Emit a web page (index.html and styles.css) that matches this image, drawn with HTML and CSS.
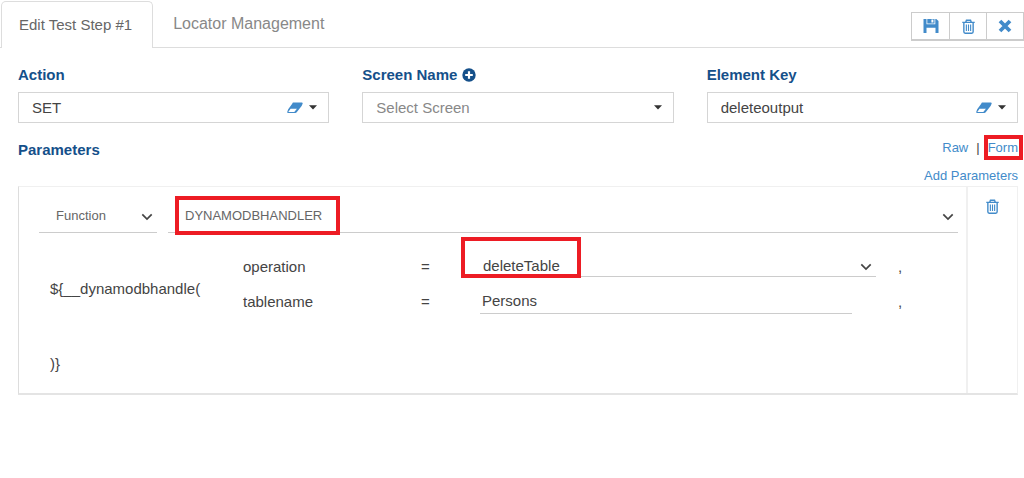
FILE: index.html
```
<!DOCTYPE html>
<html lang="en">
<head>
    <meta charset="UTF-8">
    <meta name="viewport" content="width=device-width, initial-scale=1.0">
    <title>Edit Test Step</title>
    <link rel="stylesheet" href="styles.css">
</head>
<body>

<!-- Shared icons -->
<svg class="icon-defs" aria-hidden="true">
    <symbol id="icon-trash" viewBox="0 0 14 16">
        <path d="M0.3 3.5h13.4M4 3.5l0.8-2.3h4.4l0.8 2.3M2 3.5v10.2q0 1.5 1.4 1.5h7.2q1.4 0 1.4-1.5v-10.2" fill="none" stroke="currentColor" stroke-width="1.5"/>
        <path d="M4.7 5.8v7M7 5.8v7M9.3 5.8v7" fill="none" stroke="currentColor" stroke-width="1.2"/>
    </symbol>
    <symbol id="icon-eraser" viewBox="0 0 16 12">
        <path fill="currentColor" fill-rule="evenodd" d="M6.2 0.5h8.6q1.2 0 0.8 1.2l-1 2.4-4.7 6q-0.6 0.9-1.7 0.9h-7q-1.4 0-0.9-1.3l0.9-2.5 4-5.5q0.4-1.2 1-1.2zM3.6 6.8l-2 2.7q-0.4 0.6 0.2 0.6h5.5l2.6-3.3z"/>
    </symbol>
    <symbol id="icon-caret" viewBox="0 0 8 5">
        <path fill="#333" d="M0 0.3h8l-4 4.2z"/>
    </symbol>
    <symbol id="icon-chevron" viewBox="0 0 12 8">
        <path d="M1.3 1.3l4.7 4.7 4.7-4.7" fill="none" stroke="#444" stroke-width="1.7"/>
    </symbol>
</svg>

<header class="topbar">
    <nav class="tabs">
        <a class="tab active" href="#edit">Edit Test Step #1</a>
        <a class="tab" href="#locator">Locator Management</a>
    </nav>
    <div class="toolbar">
        <button type="button" aria-label="Save">
            <svg width="16" height="16" viewBox="0 0 16 16"><path fill="currentColor" fill-rule="evenodd" d="M0.5 1h3v5.2h8.8v-5.2h1l2.2 2v12h-3v-5.3h-9v5.3h-3zM4.3 1h7.2v4.4h-7.2zM8.4 1.6v3h2v-3z"/></svg>
        </button>
        <button type="button" aria-label="Delete">
            <svg width="13" height="15"><use href="#icon-trash"/></svg>
        </button>
        <button type="button" aria-label="Close">
            <svg width="14" height="14" viewBox="0 0 14 14"><path d="M2 2l10 10M12 2l-10 10" stroke="currentColor" stroke-width="3.8"/></svg>
        </button>
    </div>
</header>

<main class="content">
    <!-- Step fields -->
    <div class="fields">
        <div class="field">
            <label for="action">Action</label>
            <div class="select-box">
                <select id="action"><option>SET</option></select>
                <span class="select-icons">
                    <svg class="eraser" width="16" height="12"><use href="#icon-eraser"/></svg>
                    <svg width="8" height="5"><use href="#icon-caret"/></svg>
                </span>
            </div>
        </div>
        <div class="field">
            <label for="screen">Screen Name
                <svg width="14" height="14" viewBox="0 0 14 14"><circle cx="7" cy="7" r="6.7" fill="currentColor"/><path d="M7 3.2v7.6M3.2 7h7.6" stroke="#fff" stroke-width="2.2"/></svg>
            </label>
            <div class="select-box placeholder">
                <select id="screen"><option>Select Screen</option></select>
                <span class="select-icons">
                    <svg width="8" height="5"><use href="#icon-caret"/></svg>
                </span>
            </div>
        </div>
        <div class="field">
            <label for="element">Element Key</label>
            <div class="select-box">
                <select id="element"><option>deleteoutput</option></select>
                <span class="select-icons">
                    <svg class="eraser" width="16" height="12"><use href="#icon-eraser"/></svg>
                    <svg width="8" height="5"><use href="#icon-caret"/></svg>
                </span>
            </div>
        </div>
    </div>

    <!-- Parameters -->
    <div class="params-head">
        <h2>Parameters</h2>
        <div class="params-links">
            <div class="view-links">
                <a href="#raw">Raw</a>
                <span>|</span>
                <a class="marked" href="#form">Form<span class="mark mark-form"></span></a>
            </div>
            <a href="#add">Add Parameters</a>
        </div>
    </div>

    <section class="panel">
        <div class="panel-main">
            <div class="type-row">
                <div class="line-select">
                    <select aria-label="Parameter type"><option>Function</option></select>
                    <svg class="chevron" width="12" height="8"><use href="#icon-chevron"/></svg>
                </div>
                <div class="line-select">
                    <select aria-label="Function name"><option>DYNAMODBHANDLER</option></select>
                    <svg class="chevron" width="12" height="8"><use href="#icon-chevron"/></svg>
                    <span class="mark mark-function"></span>
                </div>
            </div>
            <div class="call">
                <div class="call-name">${__dynamodbhandle(</div>
                <div class="args">
                    <label for="operation">operation</label>
                    <span>=</span>
                    <div class="line-select arg-select">
                        <select id="operation"><option>deleteTable</option></select>
                        <svg class="chevron" width="12" height="8"><use href="#icon-chevron"/></svg>
                        <span class="mark mark-operation"></span>
                    </div>
                    <span class="comma">,</span>

                    <label for="tablename">tablename</label>
                    <span>=</span>
                    <input id="tablename" type="text" value="Persons">
                    <span class="comma">,</span>
                </div>
            </div>
            <div class="call-end">)}</div>
        </div>
        <div class="panel-side">
            <button type="button" aria-label="Delete parameter">
                <svg width="13" height="15"><use href="#icon-trash"/></svg>
            </button>
        </div>
    </section>
</main>

</body>
</html>
```
FILE: styles.css
```
* {
    box-sizing: border-box;
}

body {
    margin: 0;
    background-color: #fff;
    color: #444;
    font-family: "Liberation Sans", Arial, sans-serif;
    font-size: 15px;
    line-height: 20px;
}

a {
    color: #428bca;
    text-decoration: none;
}

button, input, select {
    font: inherit;
    color: inherit;
}

button {
    background: #fff;
    border: none;
    padding: 0;
    color: #428bca;
    cursor: pointer;
}

select {
    appearance: none;
    width: 100%;
    border: none;
    background: transparent;
}

svg {
    display: block;
}

.icon-defs {
    display: none;
}

/* Tabs and toolbar */
.topbar {
    display: flex;
    justify-content: space-between;
    height: 48px;
    padding: 1px 0 0 1px;
    border-bottom: 1px solid #ddd;
}

.tabs {
    display: flex;
}

.tab {
    height: 47px;
    padding: 13px 20px 0;
    color: #888;
    font-size: 16px;
}

.tab.active {
    padding: 13px 20px 0 17px;
    background-color: #fff;
    border: 1px solid #ddd;
    border-bottom: none;
    border-radius: 5px 5px 0 0;
    color: #666;
    font-size: 15px;
}

.toolbar {
    display: flex;
    height: 29px;
    margin-top: 11px;
    border: 1px solid #ccc;
    border-bottom-width: 2px;
}

.toolbar button {
    display: flex;
    align-items: center;
    justify-content: center;
    width: 37px;
}

.toolbar button + button {
    border-left: 1px solid #ccc;
}

.content {
    padding: 17px 6px 0 18px;
}

/* Step fields */
.fields {
    display: grid;
    grid-template-columns: repeat(3, 1fr);
    gap: 33px;
}

.field label {
    display: flex;
    align-items: center;
    gap: 5px;
    margin-bottom: 7px;
    color: #15508a;
    font-weight: bold;
}

.select-box {
    position: relative;
    border: 1px solid #d5d5d5;
}

.select-box select {
    height: 29px;
    padding: 0 50px 0 13px;
}

.placeholder select {
    color: #888;
}

.select-icons {
    position: absolute;
    top: 0;
    right: 11px;
    height: 100%;
    display: flex;
    align-items: center;
    gap: 6px;
    pointer-events: none;
}

.eraser {
    color: #428bca;
}

/* Parameters header */
.params-head {
    display: flex;
    justify-content: space-between;
    padding-top: 15px;
}

.params-head h2 {
    margin: 2px 0 0;
    color: #15508a;
    font-size: 15px;
    line-height: 20px;
}

.params-links {
    display: flex;
    flex-direction: column;
    align-items: flex-end;
    gap: 8px;
    font-size: 13px;
}

.view-links {
    display: flex;
    gap: 8px;
}

/* Red highlight boxes */
.marked {
    position: relative;
}

.mark {
    position: absolute;
    border: 4px solid #ed1c24;
    pointer-events: none;
}

.mark-form {
    inset: -3px -5px -2px -4px;
}

.mark-function {
    top: -1px;
    left: 7px;
    width: 165px;
    height: 39px;
}

.mark-operation {
    top: -19px;
    left: -19px;
    width: 120px;
    height: 41px;
}

/* Parameter panel */
.panel {
    display: flex;
    min-height: 209px;
    border: 1px solid #f0f0f0;
    border-left-color: #ddd;
    border-bottom: 2px solid #e4e4e4;
}

.panel-main {
    flex: 1;
    padding: 10px 8px 18px 20px;
}

.panel-side {
    display: flex;
    justify-content: center;
    align-items: flex-start;
    width: 51px;
    padding-top: 12px;
    border-left: 2px solid #f0f0f0;
}

.type-row {
    display: grid;
    grid-template-columns: 118px 1fr;
    gap: 11px;
    color: #666;
    font-size: 13px;
}

.line-select {
    position: relative;
    border-bottom: 1px solid #ccc;
}

.line-select select {
    height: 35px;
    padding: 3px 30px 0 17px;
}

.chevron {
    position: absolute;
    right: 4px;
    bottom: 11px;
    pointer-events: none;
}

.call {
    display: flex;
    align-items: center;
    padding: 23px 0 0 11px;
}

.call-name {
    width: 193px;
    padding-top: 8px;
}

.args {
    flex: 1;
    display: grid;
    grid-template-columns: 178fr 59fr 396fr 82fr;
    row-gap: 13px;
    align-items: center;
}

.arg-select select {
    height: 19px;
    padding: 0 30px 0 3px;
}

.arg-select .chevron {
    bottom: 5px;
}

.comma {
    padding-left: 22px;
}

.args input {
    width: 94%;
    height: 24px;
    padding: 0 2px 3px;
    border: none;
    border-bottom: 1px solid #ccc;
    background: transparent;
}

.call-end {
    padding: 40px 0 0 11px;
}
```
